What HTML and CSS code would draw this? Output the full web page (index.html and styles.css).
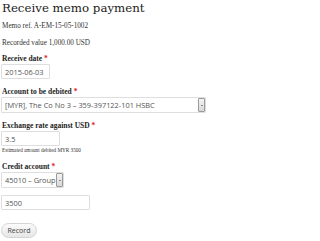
FILE: index.html
```html
<!DOCTYPE html>
<html>
<head>
<meta charset="utf-8">
<link rel="stylesheet" href="styles.css">
</head>
<body>
<div class="page">
  <h1 class="title">Receive memo payment</h1>
  <p class="info first">Memo ref. A-EM-15-05-1002</p>
  <p class="info">Recorded value 1,000.00 USD</p>
  <div class="field field-first">
    <label class="label">Receive date <span class="req">*</span></label>
    <div class="input w-date">2015-06-03</div>
  </div>
  <div class="field">
    <label class="label">Account to be debited <span class="req">*</span></label>
    <div class="select w-account"><span class="select-text">[MYR], The Co No 3 – 359-397122-101 HSBC</span><span class="arrow"><span class="tri"></span></span></div>
  </div>
  <div class="field">
    <label class="label">Exchange rate against USD <span class="req">*</span></label>
    <div class="input w-rate">3.5</div>
    <p class="hint">Estimated amount debited MYR 3500</p>
  </div>
  <div class="field">
    <label class="label">Credit account <span class="req">*</span></label>
    <div class="select w-credit"><span class="select-text">45010 – Group</span><span class="arrow"><span class="tri"></span></span></div>
  </div>
  <div class="field field-amount">
    <div class="input w-amount">3500</div>
  </div>
  <button class="btn">Record</button>
</div>
</body>
</html>
```
FILE: styles.css
```css
html, body {
  margin: 0;
  padding: 0;
  background: #ffffff;
}
.page {
  padding: 0 1px;
  font-family: "Liberation Serif", "DejaVu Serif", serif;
  color: #222;
  display: flex;
  flex-direction: column;
  align-items: flex-start;
}
.title {
  margin: 0 0 0 1px;
  font-family: "DejaVu Serif", "Liberation Serif", serif;
  font-weight: normal;
  font-size: 11.8px;
  line-height: 16px;
  color: #222;
}
.info {
  margin: 9px 0 0 1px;
  font-size: 7.2px;
  line-height: 8px;
  color: #333;
}
.info.first {
  margin-top: 6px;
}
.field {
  margin-top: 8px;
  display: flex;
  flex-direction: column;
  align-items: flex-start;
}
.field-first {
  margin-top: 7px;
}
.field-amount {
  margin-top: 7px;
}
.label {
  margin-left: 1px;
  font-weight: bold;
  font-size: 7.5px;
  line-height: 9px;
  color: #222;
  margin-bottom: 1px;
}
.req {
  color: #e02020;
}
.input, .select {
  box-sizing: border-box;
  height: 15px;
  border: 1px solid #dedede;
  border-radius: 1px;
  font-family: "Open Sans", "DejaVu Sans", sans-serif;
  font-size: 7.4px;
  color: #555;
  display: flex;
  align-items: center;
  padding-left: 3px;
  background: #fff;
}
.w-date { width: 49px; }
.w-rate { width: 59px; }
.w-amount { width: 89px; }
.w-account { width: 205px; }
.w-credit { width: 63px; }
.select {
  padding-right: 0;
  overflow: hidden;
  white-space: nowrap;
  height: 16px;
}
.select-text {
  flex: 1;
  overflow: hidden;
}
.arrow {
  width: 7px;
  height: 14px;
  margin-right: 0;
  background: linear-gradient(#f4f4f4, #d8d8d8);
  border: 1px solid #9a9a9a;
  border-radius: 1px;
  box-sizing: border-box;
  display: flex;
  align-items: center;
  justify-content: center;
  flex: none;
}
.tri {
  width: 0;
  height: 0;
  border-left: 1px solid transparent;
  border-right: 1px solid transparent;
  border-top: 1.5px solid #333;
}
.hint {
  margin: 1px 0 0 1px;
  font-size: 5.2px;
  line-height: 7px;
  color: #333;
}
.btn {
  margin-top: 13px;
  width: 36px;
  height: 15px;
  border: 1px solid #d4d4d4;
  border-radius: 8px;
  background: linear-gradient(#fbfbfb, #e6e6e6);
  font-family: "Open Sans", "DejaVu Sans", sans-serif;
  font-size: 7px;
  color: #444;
  padding: 0;
}
```
